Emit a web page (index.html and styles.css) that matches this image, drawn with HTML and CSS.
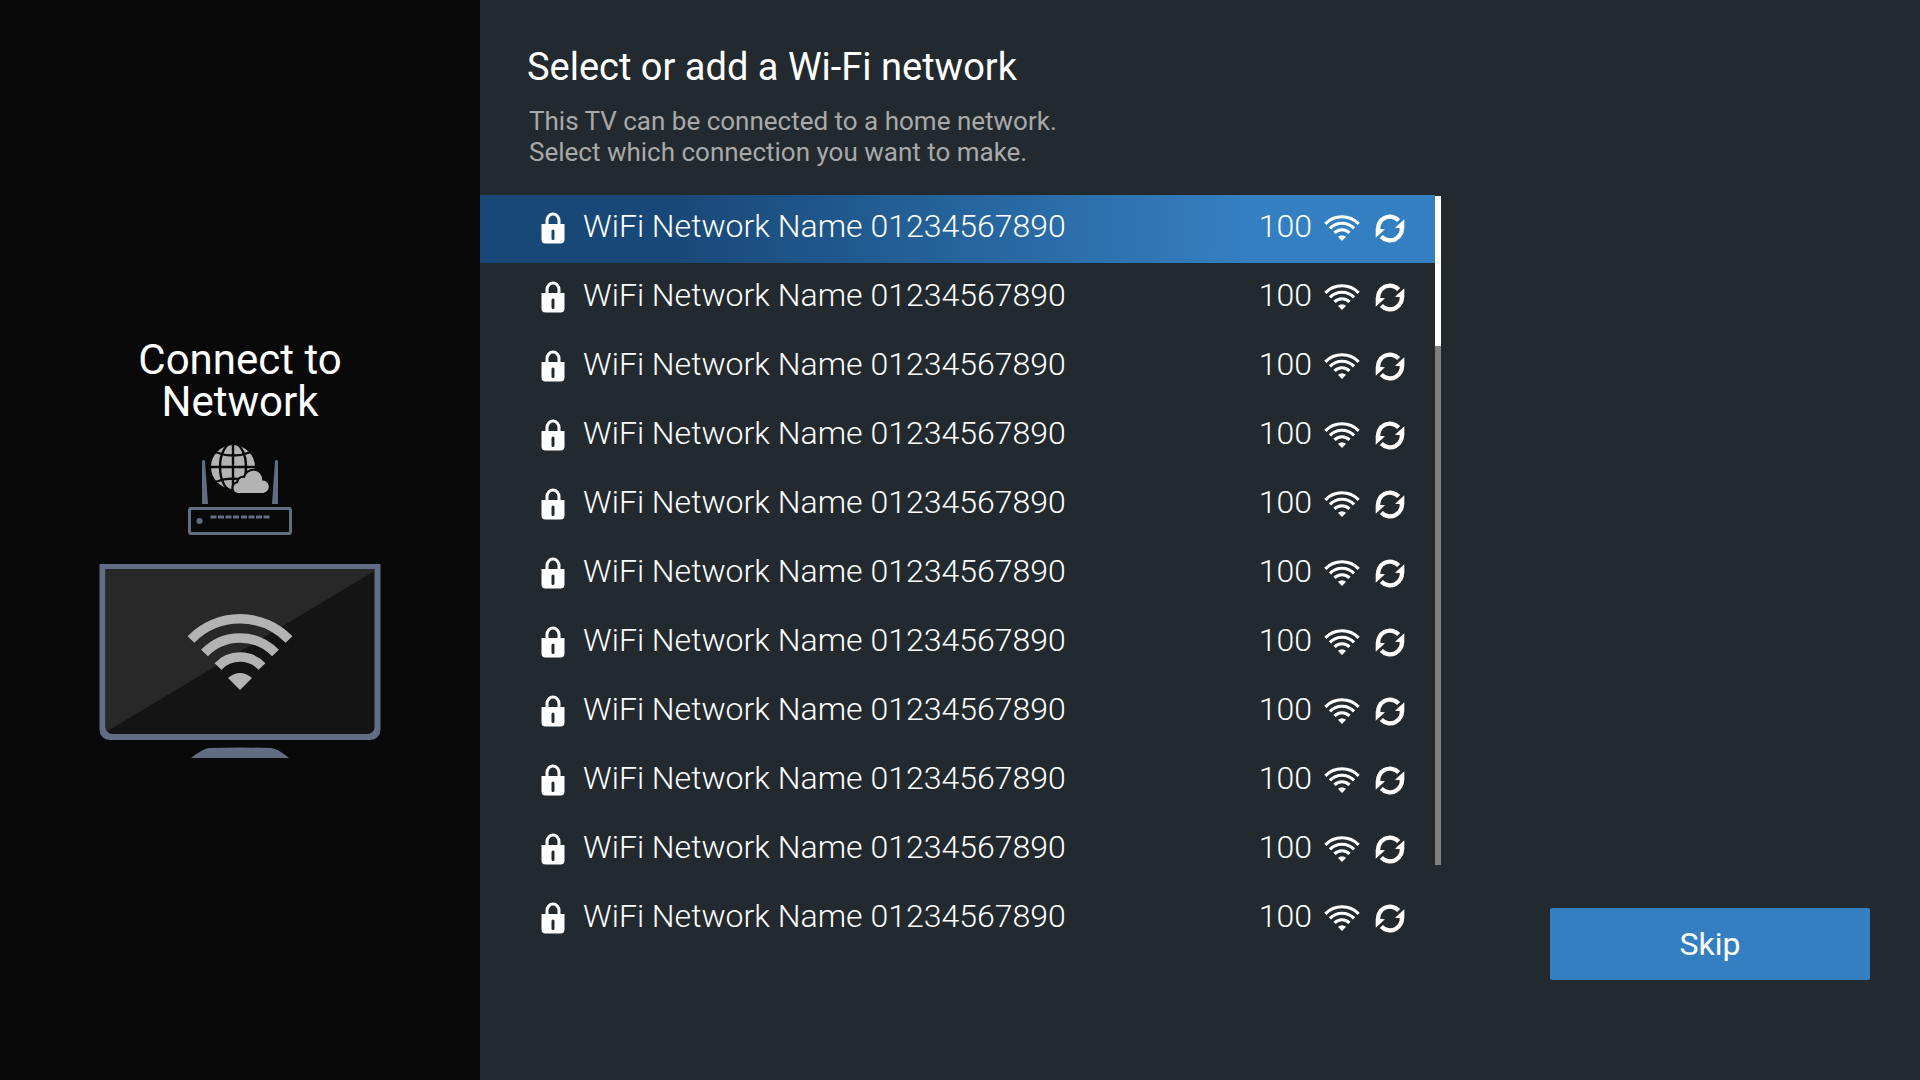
FILE: index.html
```html
<!DOCTYPE html>
<html lang="en">
<head>
<meta charset="utf-8">
<meta name="viewport" content="width=device-width, initial-scale=1">
<title>Connect to Network</title>
<link rel="stylesheet" href="styles.css">
</head>
<body>
<svg class="sprite" aria-hidden="true">
  <symbol id="lock" viewBox="0 0 24 32">
    <path class="shackle" d="M6 13V8.500a6 6.500 0 0 1 12 0V13"/>
    <path fill-rule="evenodd" d="M.5 12h23v15.500a4 4 0 0 1-4 4h-15a4 4 0 0 1-4-4zM10.500 19v7.500a1.500 1.500 0 0 0 3 0V19a1.500 1.500 0 0 0-3 0z"/>
  </symbol>
  <symbol id="wifi" viewBox="0 0 106 76">
    <g fill="none" stroke="currentColor" stroke-width="9.500">
      <path d="M4 25.500A68.500 68.500 0 0 1 102 25.500"/>
      <path d="M17.500 39A49.500 49.500 0 0 1 88.500 39"/>
      <path d="M31 52.500A30.500 30.500 0 0 1 75 52.500"/>
    </g>
    <path d="M41 64Q53 54 65 64L53 76z"/>
  </symbol>
  <symbol id="refresh" viewBox="0 0 90 86">
    <g fill="none" stroke="currentColor" stroke-width="13">
      <path d="M10 50A35.500 35.500 0 0 1 71 19"/>
      <path d="M80 36A35.500 35.500 0 0 1 19 67"/>
    </g>
    <path d="M88 15V43L60 41z"/>
    <path d="M2 71V43L30 45z"/>
  </symbol>
</svg>
<div class="screen">
  <aside class="sidebar">
    <h1 class="sidebar-title">Connect to Network</h1>
    <svg class="router" viewBox="0 0 106 92" aria-hidden="true">
      <g fill="#b3b3b3">
        <circle cx="46" cy="23" r="22"/>
        <g fill="none" stroke="#090909" stroke-width="2.400">
          <path d="M46 0V46M23 23H69M28 8Q46 15 64 8M28 38Q46 31 64 38"/>
          <ellipse cx="46" cy="23" rx="13" ry="24"/>
        </g>
        <path stroke="#090909" stroke-width="4" paint-order="stroke" d="M52 49a5 5 0 0 1-1-10q1-6 7-5a8.500 8.500 0 0 1 17 2.500a6.300 6.300 0 0 1 1.500 12.500z"/>
      </g>
      <g fill="#606d82">
        <path d="M15 17q1.500-2 3 0l3 43h-6zM88 17q1.500-2 3 0v43h-6z"/>
        <path d="M23.500 71.500h6v3h-6zM31 71.500h6v3h-6zM38.500 71.500h6v3h-6zM46 71.500h6v3h-6zM54 71.500h6v3h-6zM61.500 71.500h6v3h-6zM69 71.500h6v3h-6zM76.500 71.500h6v3h-6z"/>
        <circle cx="12.500" cy="77" r="3"/>
      </g>
      <rect x="2.500" y="64.500" width="101" height="25" rx="1.500" fill="none" stroke="#606d82" stroke-width="3"/>
    </svg>
    <svg class="tv" viewBox="0 0 282 194" aria-hidden="true">
      <path fill="#606d82" d="M.5 0h281v166a10 10 0 0 1-10 10h-261a10 10 0 0 1-10-10z"/>
      <path fill="#141414" d="M6.500 5h269v158a7 7 0 0 1-7 7h-255a7 7 0 0 1-7-7z"/>
      <path fill="#282828" d="M6.500 5h269v2L8.500 167q-2-2-2-5z"/>
      <path fill="#606d82" d="M92 194q13-10 18-10q31-1 62 0q6 0 18 10z"/>
      <use href="#wifi" class="tv-wifi" x="88" y="50" width="106" height="76"/>
    </svg>
  </aside>
  <main class="main">
    <header class="header">
      <h2 class="title">Select or add a Wi-Fi network</h2>
      <p class="subtitle">This TV can be connected to a home network.<br>Select which connection you want to make.</p>
    </header>
    <section class="networks">
      <ul class="list">
        <li><button class="network selected" type="button"><svg class="lock"><use href="#lock"/></svg><span class="name">WiFi Network Name 01234567890</span><span class="signal">100</span><svg class="wifi"><use href="#wifi"/></svg><svg class="refresh"><use href="#refresh"/></svg></button></li>
        <li><button class="network" type="button"><svg class="lock"><use href="#lock"/></svg><span class="name">WiFi Network Name 01234567890</span><span class="signal">100</span><svg class="wifi"><use href="#wifi"/></svg><svg class="refresh"><use href="#refresh"/></svg></button></li>
        <li><button class="network" type="button"><svg class="lock"><use href="#lock"/></svg><span class="name">WiFi Network Name 01234567890</span><span class="signal">100</span><svg class="wifi"><use href="#wifi"/></svg><svg class="refresh"><use href="#refresh"/></svg></button></li>
        <li><button class="network" type="button"><svg class="lock"><use href="#lock"/></svg><span class="name">WiFi Network Name 01234567890</span><span class="signal">100</span><svg class="wifi"><use href="#wifi"/></svg><svg class="refresh"><use href="#refresh"/></svg></button></li>
        <li><button class="network" type="button"><svg class="lock"><use href="#lock"/></svg><span class="name">WiFi Network Name 01234567890</span><span class="signal">100</span><svg class="wifi"><use href="#wifi"/></svg><svg class="refresh"><use href="#refresh"/></svg></button></li>
        <li><button class="network" type="button"><svg class="lock"><use href="#lock"/></svg><span class="name">WiFi Network Name 01234567890</span><span class="signal">100</span><svg class="wifi"><use href="#wifi"/></svg><svg class="refresh"><use href="#refresh"/></svg></button></li>
        <li><button class="network" type="button"><svg class="lock"><use href="#lock"/></svg><span class="name">WiFi Network Name 01234567890</span><span class="signal">100</span><svg class="wifi"><use href="#wifi"/></svg><svg class="refresh"><use href="#refresh"/></svg></button></li>
        <li><button class="network" type="button"><svg class="lock"><use href="#lock"/></svg><span class="name">WiFi Network Name 01234567890</span><span class="signal">100</span><svg class="wifi"><use href="#wifi"/></svg><svg class="refresh"><use href="#refresh"/></svg></button></li>
        <li><button class="network" type="button"><svg class="lock"><use href="#lock"/></svg><span class="name">WiFi Network Name 01234567890</span><span class="signal">100</span><svg class="wifi"><use href="#wifi"/></svg><svg class="refresh"><use href="#refresh"/></svg></button></li>
        <li><button class="network" type="button"><svg class="lock"><use href="#lock"/></svg><span class="name">WiFi Network Name 01234567890</span><span class="signal">100</span><svg class="wifi"><use href="#wifi"/></svg><svg class="refresh"><use href="#refresh"/></svg></button></li>
        <li><button class="network" type="button"><svg class="lock"><use href="#lock"/></svg><span class="name">WiFi Network Name 01234567890</span><span class="signal">100</span><svg class="wifi"><use href="#wifi"/></svg><svg class="refresh"><use href="#refresh"/></svg></button></li>
      </ul>
      <div class="track"><div class="thumb"></div></div>
    </section>
    <div class="actions"><button class="skip" type="button">Skip</button></div>
  </main>
</div>
</body>
</html>
```
FILE: styles.css
```css
* {
  box-sizing: border-box;
}

body {
  margin: 0;
  background: #222a30;
  color: #fff;
  font-family: Roboto, "Liberation Sans", sans-serif;
}

h1, h2, p, ul {
  margin: 0;
  padding: 0;
  font-weight: 400;
}

button {
  border: 0;
  color: inherit;
  font-family: inherit;
  cursor: pointer;
}

svg {
  display: block;
  flex: none;
  fill: currentColor;
}

.sprite {
  display: none;
}

.shackle {
  fill: none;
  stroke: currentColor;
  stroke-width: 3px;
}

.screen {
  display: grid;
  grid-template-columns: 1fr 3fr;
  min-height: 100vh;
}

.sidebar {
  display: flex;
  flex-direction: column;
  align-items: center;
  justify-content: center;
  padding-top: 17px;
  background: #090909;
}

.sidebar-title {
  width: 240px;
  font-size: 42px;
  line-height: 42px;
  text-align: center;
}

.router {
  width: 106px;
  height: 92px;
  margin-top: 21px;
}

.tv {
  width: 282px;
  height: 194px;
  margin-top: 28px;
}

.tv-wifi {
  color: #b3b3b3;
  fill: #b3b3b3;
}

.main {
  display: grid;
  grid-template-columns: 2fr 1fr;
  grid-template-rows: auto 1fr;
}

.header {
  grid-column: 1 / -1;
  padding: 44px 47px 27px;
}

.title {
  font-size: 38px;
  line-height: 46px;
}

.subtitle {
  margin-top: 16px;
  padding-left: 2px;
  font-size: 26px;
  line-height: 31px;
  color: #a9a9a9;
}

.networks {
  display: flex;
  align-items: flex-start;
  margin-right: -1px;
}

.list {
  flex: 1;
  display: grid;
  gap: 1px;
  list-style: none;
}

.network {
  display: flex;
  align-items: center;
  width: 100%;
  height: 68px;
  padding: 0 30px 2px 61px;
  background: none;
  font-size: 32px;
  font-weight: 300;
  line-height: 38px;
  text-align: left;
}

.selected {
  background: linear-gradient(90deg, #184877 20%, #347fc1 80%);
}

.name,
.signal {
  padding-bottom: 4px;
}

.name {
  flex: 1;
  margin-left: 18px;
}

.lock {
  width: 24px;
  height: 32px;
}

.wifi {
  width: 36px;
  height: 26px;
  margin: 0 15px 0 12px;
}

.refresh {
  width: 30px;
  height: 29px;
}

.track {
  width: 6px;
  height: 669px;
  margin-top: 1px;
  background: #808080;
}

.thumb {
  height: 150px;
  background: #fff;
}

.actions {
  display: flex;
  align-items: flex-end;
  justify-content: flex-end;
  padding: 0 50px 100px;
}

.skip {
  width: 320px;
  height: 72px;
  border-radius: 2px;
  background: #347fc1;
  font-size: 32px;
}
```
